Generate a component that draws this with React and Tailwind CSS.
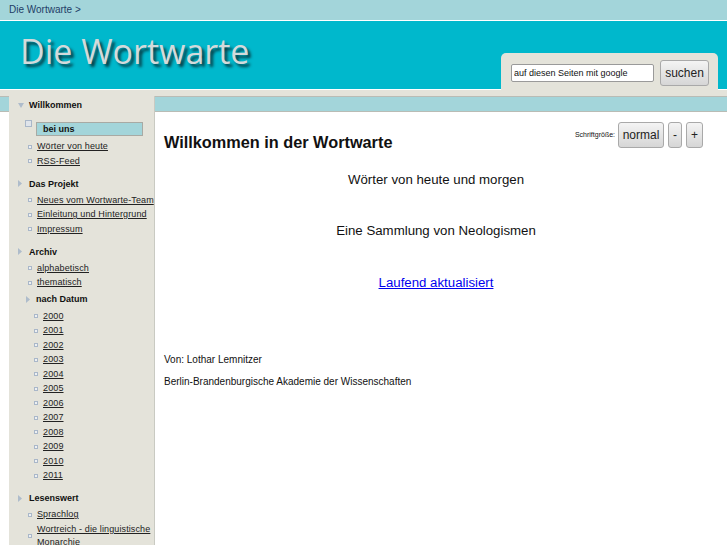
import React from "react";

const Tri = ({ open }) =>
  open ? (
    <svg width="6" height="5" viewBox="0 0 6 5">
      <path d="M0 0h6L3 5z" fill="#aebccb" />
    </svg>
  ) : (
    <svg width="4" height="7" viewBox="0 0 4 7">
      <path d="M0 0l4 3.5L0 7z" fill="#aebccb" />
    </svg>
  );

const Bullet = () => (
  <span className="block w-[4px] h-[4px] border border-[#a9b7c9] bg-[#eef0f2] shrink-0" />
);

const Head = ({ children, open, indent = 9, width = 11, className = "" }) => (
  <div
    className={`flex items-center leading-[14.5px] text-[9px] font-bold text-[#111] ${className}`}
    style={{ paddingLeft: indent }}
  >
    <span className="flex shrink-0" style={{ width }}>
      <Tri open={open} />
    </span>
    {children}
  </div>
);

const Item = ({ children, indent = 19 }) => (
  <li className="flex items-center leading-[13.5px] py-[0.5px] text-[9px] tracking-[0.12px]" style={{ paddingLeft: indent }}>
    <Bullet />
    <a href="#" className="ml-[5px] underline text-[#222]">
      {children}
    </a>
  </li>
);

const years = ["2000", "2001", "2002", "2003", "2004", "2005", "2006", "2007", "2008", "2009", "2010", "2011"];

const Sidebar = () => (
  <aside className="w-[145px] shrink-0 bg-[#e4e3da] pt-[8px]">
    <Head open>Willkommen</Head>
    <div className="flex items-start mt-[7px] pl-[16px]">
      <span className="block w-[7px] h-[7px] border border-[#a9b7c9] bg-[#dfe4ea] shrink-0" />
      <div className="ml-[4px] mt-[2px] w-[107px] h-[14px] bg-[#a3d5da] border border-[#a8aaa4] pl-[6px] text-[9px] font-bold leading-[12px]">
        bei uns
      </div>
    </div>
    <ul className="mt-[4px]">
      <Item>Wörter von heute</Item>
      <Item>RSS-Feed</Item>
    </ul>

    <Head className="mt-[8px] mb-[2px]">Das Projekt</Head>
    <ul>
      <Item>Neues vom Wortwarte-Team</Item>
      <Item>Einleitung und Hintergrund</Item>
      <Item>Impressum</Item>
    </ul>

    <Head className="mt-[8px] mb-[2px]">Archiv</Head>
    <ul>
      <Item>alphabetisch</Item>
      <Item>thematisch</Item>
    </ul>
    <Head indent={17} width={10} className="mt-[2px] mb-[2.5px]">
      nach Datum
    </Head>
    <ul>
      {years.map((y) => (
        <Item key={y} indent={25}>
          {y}
        </Item>
      ))}
    </ul>

    <Head className="mt-[8px] mb-[2px]">Lesenswert</Head>
    <ul>
      <Item>Sprachlog</Item>
      <Item>Wortreich - die linguistische Monarchie</Item>
    </ul>
  </aside>
);

const Btn = ({ children, className = "" }) => (
  <button
    className={`h-[26px] rounded-[3px] border border-[#a9a9a9] bg-gradient-to-b from-[#f4f4f4] to-[#d6d6d6] text-[12px] text-[#222] leading-none ${className}`}
  >
    {children}
  </button>
);

export default function App() {
  return (
    <div className="h-[545px] overflow-hidden bg-white font-['Liberation_Sans',Arial,sans-serif] text-[#111]">
      {/* breadcrumb */}
      <div className="h-[21px] bg-[#a3d5da] border-b border-white pl-[9px] text-[10px] leading-[20px] text-[#1f3d66]">
        Die Wortwarte &gt;
      </div>

      {/* header */}
      <header className="h-[69px] bg-[#00b8cc] border-b border-white flex justify-between items-end">
        <div className="self-start pl-[20px] pt-[13px] text-[34px] leading-[34px] font-['Open_Sans',sans-serif] text-[#d3dadb] [text-shadow:3px_3px_3px_#073a42]">
          Die Wortwarte
        </div>
        <div className="-mb-px mr-[9px] w-[217px] h-[37px] bg-[#e4e3da] rounded-t-[5px] flex items-center pl-[10px] pt-[2px]">
          <input
            readOnly
            value="auf diesen Seiten mit google"
            className="w-[143px] h-[18px] bg-white border border-[#9a9a9a] rounded-[2px] px-[2px] text-[9px] text-[#111] outline-none"
          />
          <Btn className="ml-[6px] w-[49px] text-[12.5px]">suchen</Btn>
        </div>
      </header>

      {/* body */}
      <div className="flex h-full">
        <div className="w-[9px] shrink-0">
          <div className="h-[6px] bg-[#e4e3da]" />
          <div className="h-[16px] bg-[#a3d5da] border-y border-[#b9bcb5]" />
        </div>

        <Sidebar />

        <main className="flex-1 flex flex-col">
          <div className="h-[6px] bg-[#e4e3da]" />
          <div className="flex-1 border-l border-[#c9cac2]">
            <div className="h-[16px] bg-[#a3d5da] border-y border-[#b9bcb5]" />
            <div className="pl-[9px] pr-[19px]">
              <div className="mt-[10px] flex justify-between items-start">
                <h1 className="mt-[11px] text-[16.3px] leading-[18px] font-bold text-[#111]">
                  Willkommen in der Wortwarte
                </h1>
                <div className="flex items-center mr-[5px]">
                  <span className="text-[7px] text-[#111] mr-[3px]">Schriftgröße:</span>
                  <Btn className="w-[46px]">normal</Btn>
                  <Btn className="ml-[4px] w-[14px]">-</Btn>
                  <Btn className="ml-[4px] w-[17px]">+</Btn>
                </div>
              </div>

              <div className="text-center text-[13.25px] leading-[16px]">
                <p className="mt-[21px]">Wörter von heute und morgen</p>
                <p className="mt-[35px]">Eine Sammlung von Neologismen</p>
                <p className="mt-[36px]">
                  <a href="#" className="text-[#0000ee] underline">
                    Laufend aktualisiert
                  </a>
                </p>
              </div>

              <div className="text-[10px] leading-[12px]">
                <p className="mt-[63px]">Von: Lothar Lemnitzer</p>
                <p className="mt-[10px]">Berlin-Brandenburgische Akademie der Wissenschaften</p>
              </div>
            </div>
          </div>
        </main>
      </div>
    </div>
  );
}
